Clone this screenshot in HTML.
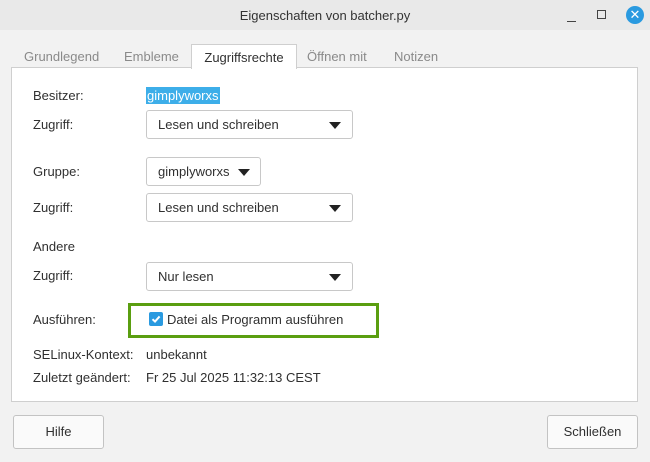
<!DOCTYPE html>
<html><head><style>
*{box-sizing:border-box;margin:0;padding:0}
body{width:650px;height:462px;background:#f2f2f2;font-family:"Liberation Sans",sans-serif;font-size:13px;color:#303030;position:relative;overflow:hidden}
.abs{position:absolute;white-space:nowrap}
.title{left:0;top:0;width:650px;height:30px;background:#e9e9e9;text-align:center;line-height:31px;color:#333;font-size:13px}
.tab{top:45px;height:23px;line-height:24px;color:#8a8a8a}
.content{left:11px;top:67px;width:627px;height:335px;background:#fff;border:1px solid #cfcfcf}
.acttab{left:191px;top:44px;width:106px;height:25px;background:#fff;border:1px solid #cfcfcf;border-bottom:none;text-align:center;line-height:25px;color:#303030}
.lbl{left:33px}
.combo{background:#fff;border:1px solid #c8c8c8;border-radius:3px;height:29px;line-height:27px;padding-left:11px}
.arr{position:absolute;right:11px;top:11px;width:0;height:0;border-left:6px solid transparent;border-right:6px solid transparent;border-top:7px solid #222}
.btn{background:#fafafa;border:1px solid #c3c3c3;border-radius:3px;height:34px;line-height:32px;text-align:center}
</style></head><body>
<div class="abs title">Eigenschaften von batcher.py</div>
<div class="abs" style="left:567px;top:21px;width:9px;height:1px;background:#444"></div>
<div class="abs" style="left:597px;top:10px;width:9px;height:9px;border:1px solid #444"></div>
<div class="abs" style="left:626px;top:6px;width:18px;height:18px;border-radius:50%;background:#2a9ae0;color:#fff;text-align:center;line-height:18px;font-size:13px">✕</div>
<div class="abs content"></div>
<div class="abs tab" style="left:24px">Grundlegend</div>
<div class="abs tab" style="left:124px">Embleme</div>
<div class="abs acttab">Zugriffsrechte</div>
<div class="abs tab" style="left:307px">Öffnen mit</div>
<div class="abs tab" style="left:394px">Notizen</div>

<div class="abs lbl" style="top:88px">Besitzer:</div>
<div class="abs" style="left:146px;top:87px;background:#3daee9;color:#fff;padding:0 1px;line-height:17px">gimplyworxs</div>
<div class="abs lbl" style="top:117px">Zugriff:</div>
<div class="abs combo" style="left:146px;top:110px;width:207px">Lesen und schreiben<div class="arr"></div></div>

<div class="abs lbl" style="top:164px">Gruppe:</div>
<div class="abs combo" style="left:146px;top:157px;width:115px">gimplyworxs<div class="arr" style="right:10px"></div></div>
<div class="abs lbl" style="top:200px">Zugriff:</div>
<div class="abs combo" style="left:146px;top:193px;width:207px">Lesen und schreiben<div class="arr"></div></div>

<div class="abs lbl" style="top:239px">Andere</div>
<div class="abs lbl" style="top:268px">Zugriff:</div>
<div class="abs combo" style="left:146px;top:262px;width:207px">Nur lesen<div class="arr"></div></div>

<div class="abs lbl" style="top:312px">Ausführen:</div>
<div class="abs" style="left:128px;top:303px;width:251px;height:35px;border:3px solid #5a9e10"></div>
<div class="abs" style="left:149px;top:312px;width:14px;height:14px;border-radius:2px;background:#2a9ae0">
<svg width="14" height="14" viewBox="0 0 14 14"><path d="M3.5 7.2 L6 9.6 L10.6 4.4" stroke="#fff" stroke-width="2" fill="none"/></svg></div>
<div class="abs" style="left:167px;top:312px">Datei als Programm ausführen</div>

<div class="abs lbl" style="top:347px">SELinux-Kontext:</div>
<div class="abs" style="left:146px;top:347px">unbekannt</div>
<div class="abs lbl" style="top:370px">Zuletzt geändert:</div>
<div class="abs" style="left:146px;top:370px">Fr 25 Jul 2025 11:32:13 CEST</div>

<div class="abs btn" style="left:13px;top:415px;width:91px">Hilfe</div>
<div class="abs btn" style="left:547px;top:415px;width:91px">Schließen</div>
</body></html>
